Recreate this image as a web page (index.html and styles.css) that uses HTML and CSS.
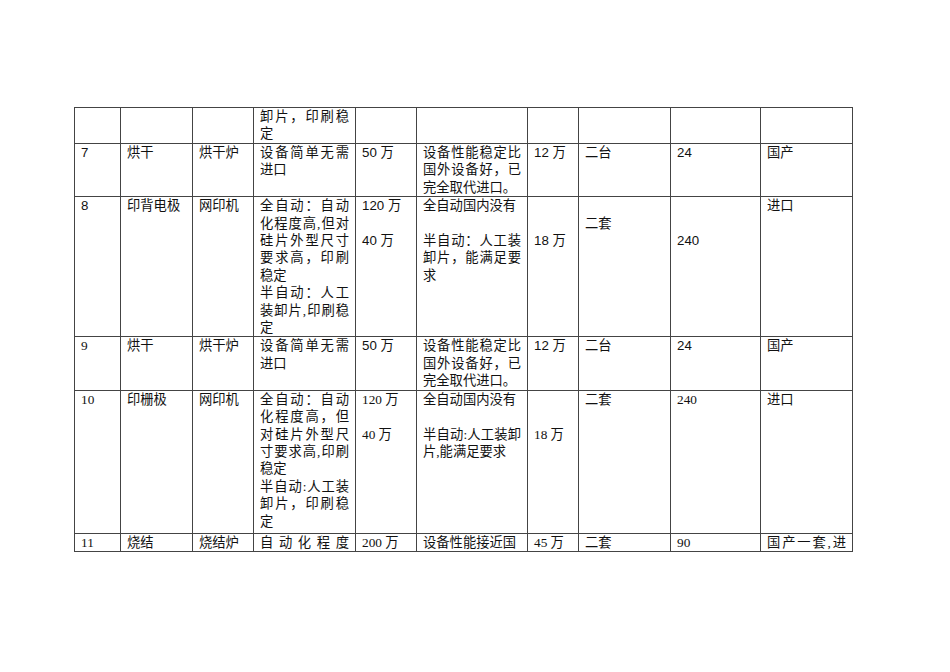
FILE: index.html
```html
<!DOCTYPE html>
<html lang="zh-CN">
<head>
<meta charset="utf-8">
<title>设备表</title>
<link rel="stylesheet" href="styles.css">
</head>
<body>
<div class="page">
<table class="grid">
<colgroup>
<col class="w1"><col class="w2"><col class="w3"><col class="w4"><col class="w5">
<col class="w6"><col class="w7"><col class="w8"><col class="w9"><col class="w10">
</colgroup>
<tr class="r0">
<td></td><td></td><td></td><td>卸片，印刷稳定</td><td></td><td></td><td></td><td></td><td></td><td></td>
</tr>
<tr class="r7">
<td class="sans">7</td><td>烘干</td><td>烘干炉</td><td>设备简单无需进口</td><td class="sans">50 万</td>
<td>设备性能稳定比国外设备好，已完全取代进口。</td><td class="sans">12 万</td><td>二台</td><td class="sans">24</td><td>国产</td>
</tr>
<tr class="r8">
<td class="sans">8</td><td>印背电极</td><td>网印机</td>
<td>全自动：自动化程度高,但对硅片外型尺寸要求高，印刷稳定<br>半自动：人工装卸片,印刷稳定</td>
<td class="sans">120 万<br><br>40 万</td>
<td>全自动国内没有<br><br>半自动：人工装卸片，能满足要求</td>
<td class="sans"><br><br>18 万</td><td><br>二套</td><td class="sans"><br><br>240</td><td>进口</td>
</tr>
<tr class="r9">
<td>9</td><td>烘干</td><td>烘干炉</td><td>设备简单无需进口</td><td class="sans">50 万</td>
<td>设备性能稳定比国外设备好，已完全取代进口。</td><td class="sans">12 万</td><td>二台</td><td class="sans">24</td><td>国产</td>
</tr>
<tr class="r10">
<td>10</td><td>印栅极</td><td>网印机</td>
<td>全自动：自动化程度高，但对硅片外型尺寸要求高,印刷稳定<br>半自动:人工装卸片，印刷稳定</td>
<td>120 万<br><br>40 万</td>
<td>全自动国内没有<br><br>半自动:人工装卸片,能满足要求</td>
<td><br><br>18 万</td><td>二套</td><td>240</td><td>进口</td>
</tr>
<tr class="r11">
<td>11</td><td>烧结</td><td>烧结炉</td>
<td class="spread">自动化程度</td><td>200 万</td>
<td>设备性能接近国</td><td>45 万</td>
<td>二套</td><td>90</td><td class="spread">国产一套,进</td>
</tr>
</table>
</div>
</body>
</html>
```

FILE: styles.css
```css
html, body {
  margin: 0;
  padding: 0;
  background: #ffffff;
}

body {
  font-family: "Liberation Serif", "Noto Sans CJK SC", serif;
  font-size: 13.3px;
  color: #111111;
}

.page {
  padding: 107px 0 0 74px;
}

.grid {
  border-collapse: collapse;
  table-layout: fixed;
  width: 779px;
}

.w1 { width: 46px; }
.w2 { width: 72px; }
.w3 { width: 61px; }
.w4 { width: 102px; }
.w5 { width: 61px; }
.w6 { width: 111px; }
.w7 { width: 51px; }
.w8 { width: 92px; }
.w9 { width: 90px; }
.w10 { width: 92px; }

.grid td {
  border: 1px solid #444444;
  padding: 0 6px;
  vertical-align: top;
  text-align: justify;
  line-height: 17.4px;
  overflow: hidden;
}

.grid td.sans {
  font-family: "Liberation Sans", "Noto Sans CJK SC", sans-serif;
}

.grid td.spread {
  text-align-last: justify;
}

.r0 td { height: 35px; }
.r7 td { height: 51px; }
.r8 td { height: 139px; }
.r9 td { height: 51px; }
.r10 td { height: 142px; }
.r11 td { height: 17px; }
```
